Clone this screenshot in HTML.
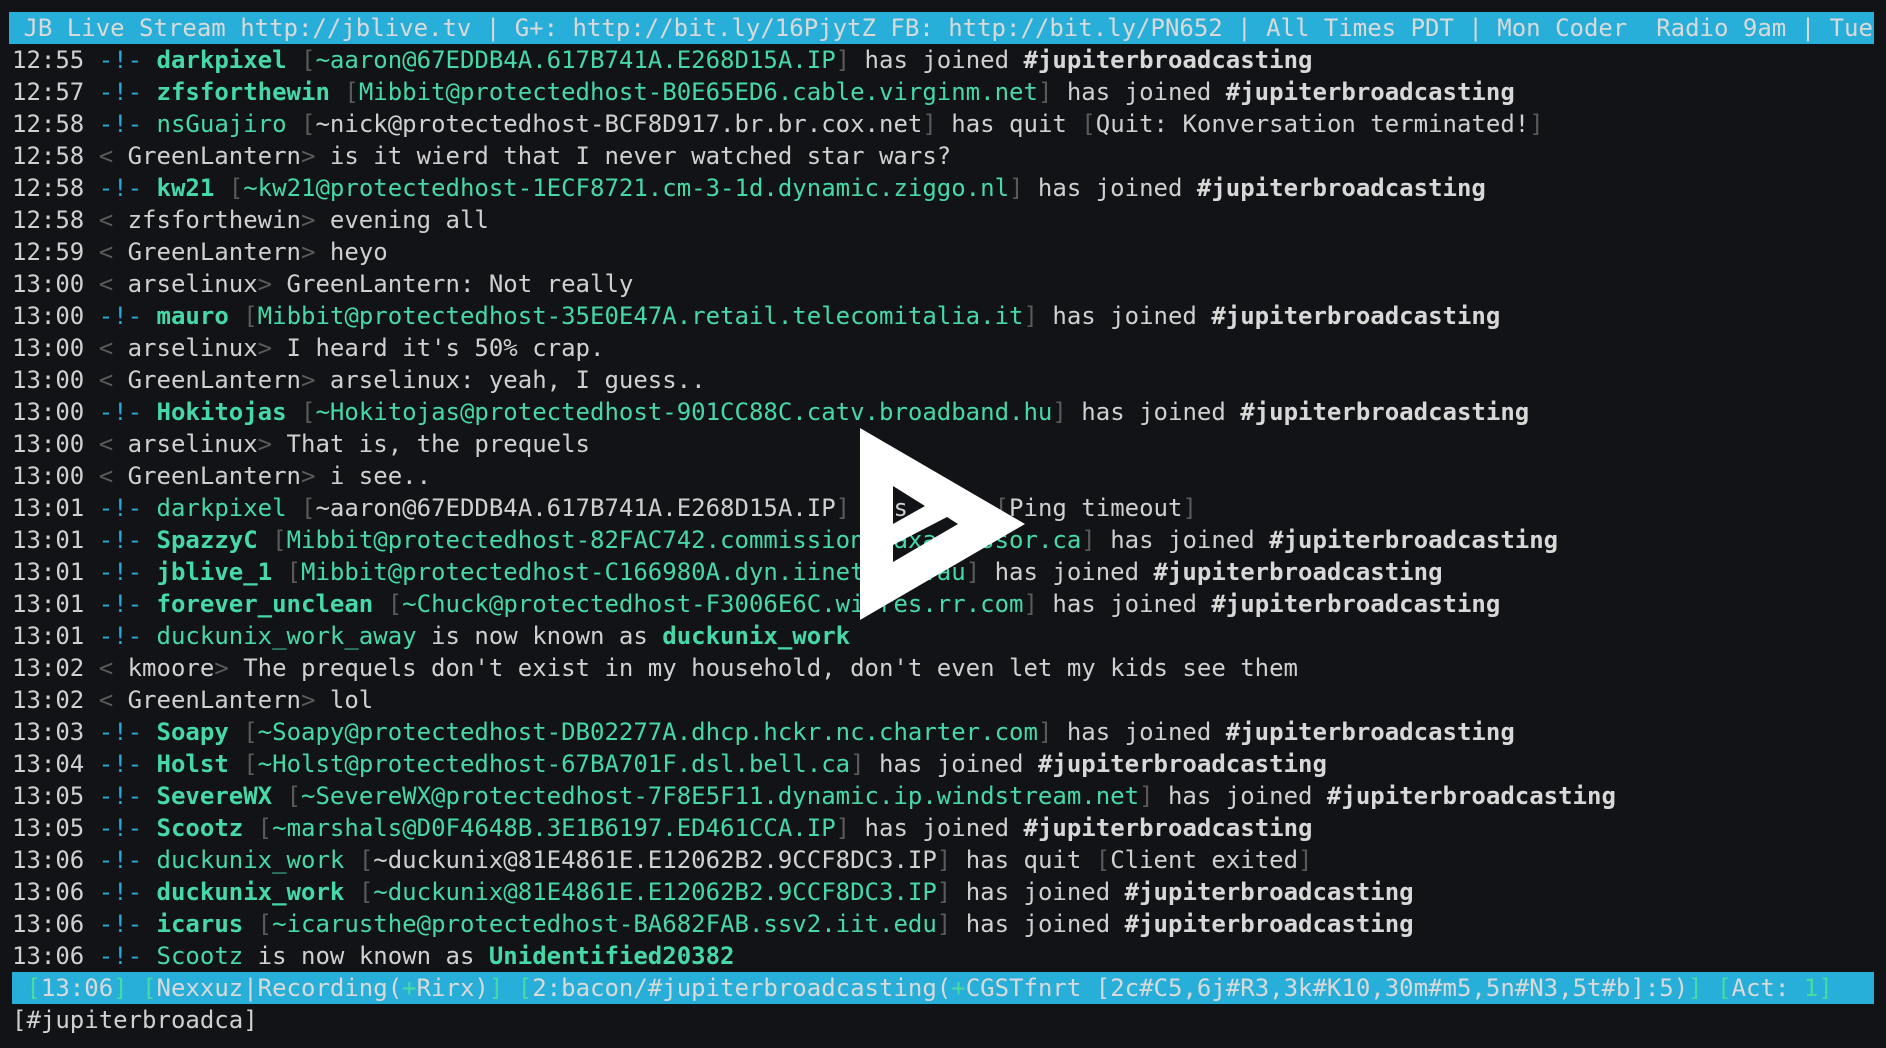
<!DOCTYPE html>
<html><head><meta charset="utf-8"><style>
html,body{margin:0;padding:0;background:#121316;width:1886px;height:1048px;overflow:hidden}
#t{position:absolute;left:12px;top:12px;font-family:"DejaVu Sans Mono","Liberation Mono",monospace;font-size:24px;line-height:32px;color:#d0d0d0}
.l{height:32px;white-space:pre;overflow:hidden}
.bar{background:#27afd9;color:#d9d9d9;width:1862px;margin-left:-3px}
.b{color:#27a9d9}.n{color:#46d9a8;font-weight:bold}.c{color:#46d9a8}.g{color:#5a5a5a}.w{color:#d8d8d8;font-weight:bold}.q{color:#4ad9a0}
</style></head><body>
<div id="t">
<div class="l bar" style="margin-left:-3px;width:1865px"> JB Live Stream http://jblive.tv | G+: http://bit.ly/16PjytZ FB: http://bit.ly/PN652 | All Times PDT | Mon Coder  Radio 9am | Tue</div>
<div class="l">12:55 <span class="b">-!-</span> <span class="n">darkpixel</span> <span class="g">[</span><span class="c">~aaron@67EDDB4A.617B741A.E268D15A.IP</span><span class="g">]</span> has joined <span class="w">#jupiterbroadcasting</span></div>
<div class="l">12:57 <span class="b">-!-</span> <span class="n">zfsforthewin</span> <span class="g">[</span><span class="c">Mibbit@protectedhost-B0E65ED6.cable.virginm.net</span><span class="g">]</span> has joined <span class="w">#jupiterbroadcasting</span></div>
<div class="l">12:58 <span class="b">-!-</span> <span class="c">nsGuajiro</span> <span class="g">[</span>~nick@protectedhost-BCF8D917.br.br.cox.net<span class="g">]</span> has quit <span class="g">[</span>Quit: Konversation terminated!<span class="g">]</span></div>
<div class="l">12:58 <span class="g">&lt;</span> GreenLantern<span class="g">&gt;</span> is it wierd that I never watched star wars?</div>
<div class="l">12:58 <span class="b">-!-</span> <span class="n">kw21</span> <span class="g">[</span><span class="c">~kw21@protectedhost-1ECF8721.cm-3-1d.dynamic.ziggo.nl</span><span class="g">]</span> has joined <span class="w">#jupiterbroadcasting</span></div>
<div class="l">12:58 <span class="g">&lt;</span> zfsforthewin<span class="g">&gt;</span> evening all</div>
<div class="l">12:59 <span class="g">&lt;</span> GreenLantern<span class="g">&gt;</span> heyo</div>
<div class="l">13:00 <span class="g">&lt;</span> arselinux<span class="g">&gt;</span> GreenLantern: Not really</div>
<div class="l">13:00 <span class="b">-!-</span> <span class="n">mauro</span> <span class="g">[</span><span class="c">Mibbit@protectedhost-35E0E47A.retail.telecomitalia.it</span><span class="g">]</span> has joined <span class="w">#jupiterbroadcasting</span></div>
<div class="l">13:00 <span class="g">&lt;</span> arselinux<span class="g">&gt;</span> I heard it's 50% crap.</div>
<div class="l">13:00 <span class="g">&lt;</span> GreenLantern<span class="g">&gt;</span> arselinux: yeah, I guess..</div>
<div class="l">13:00 <span class="b">-!-</span> <span class="n">Hokitojas</span> <span class="g">[</span><span class="c">~Hokitojas@protectedhost-901CC88C.catv.broadband.hu</span><span class="g">]</span> has joined <span class="w">#jupiterbroadcasting</span></div>
<div class="l">13:00 <span class="g">&lt;</span> arselinux<span class="g">&gt;</span> That is, the prequels</div>
<div class="l">13:00 <span class="g">&lt;</span> GreenLantern<span class="g">&gt;</span> i see..</div>
<div class="l">13:01 <span class="b">-!-</span> <span class="c">darkpixel</span> <span class="g">[</span>~aaron@67EDDB4A.617B741A.E268D15A.IP<span class="g">]</span> has quit <span class="g">[</span>Ping timeout<span class="g">]</span></div>
<div class="l">13:01 <span class="b">-!-</span> <span class="n">SpazzyC</span> <span class="g">[</span><span class="c">Mibbit@protectedhost-82FAC742.commission.taxassessor.ca</span><span class="g">]</span> has joined <span class="w">#jupiterbroadcasting</span></div>
<div class="l">13:01 <span class="b">-!-</span> <span class="n">jblive_1</span> <span class="g">[</span><span class="c">Mibbit@protectedhost-C166980A.dyn.iinet.net.au</span><span class="g">]</span> has joined <span class="w">#jupiterbroadcasting</span></div>
<div class="l">13:01 <span class="b">-!-</span> <span class="n">forever_unclean</span> <span class="g">[</span><span class="c">~Chuck@protectedhost-F3006E6C.wi.res.rr.com</span><span class="g">]</span> has joined <span class="w">#jupiterbroadcasting</span></div>
<div class="l">13:01 <span class="b">-!-</span> <span class="c">duckunix_work_away</span> is now known as <span class="n">duckunix_work</span></div>
<div class="l">13:02 <span class="g">&lt;</span> kmoore<span class="g">&gt;</span> The prequels don't exist in my household, don't even let my kids see them</div>
<div class="l">13:02 <span class="g">&lt;</span> GreenLantern<span class="g">&gt;</span> lol</div>
<div class="l">13:03 <span class="b">-!-</span> <span class="n">Soapy</span> <span class="g">[</span><span class="c">~Soapy@protectedhost-DB02277A.dhcp.hckr.nc.charter.com</span><span class="g">]</span> has joined <span class="w">#jupiterbroadcasting</span></div>
<div class="l">13:04 <span class="b">-!-</span> <span class="n">Holst</span> <span class="g">[</span><span class="c">~Holst@protectedhost-67BA701F.dsl.bell.ca</span><span class="g">]</span> has joined <span class="w">#jupiterbroadcasting</span></div>
<div class="l">13:05 <span class="b">-!-</span> <span class="n">SevereWX</span> <span class="g">[</span><span class="c">~SevereWX@protectedhost-7F8E5F11.dynamic.ip.windstream.net</span><span class="g">]</span> has joined <span class="w">#jupiterbroadcasting</span></div>
<div class="l">13:05 <span class="b">-!-</span> <span class="n">Scootz</span> <span class="g">[</span><span class="c">~marshals@D0F4648B.3E1B6197.ED461CCA.IP</span><span class="g">]</span> has joined <span class="w">#jupiterbroadcasting</span></div>
<div class="l">13:06 <span class="b">-!-</span> <span class="c">duckunix_work</span> <span class="g">[</span>~duckunix@81E4861E.E12062B2.9CCF8DC3.IP<span class="g">]</span> has quit <span class="g">[</span>Client exited<span class="g">]</span></div>
<div class="l">13:06 <span class="b">-!-</span> <span class="n">duckunix_work</span> <span class="g">[</span><span class="c">~duckunix@81E4861E.E12062B2.9CCF8DC3.IP</span><span class="g">]</span> has joined <span class="w">#jupiterbroadcasting</span></div>
<div class="l">13:06 <span class="b">-!-</span> <span class="n">icarus</span> <span class="g">[</span><span class="c">~icarusthe@protectedhost-BA682FAB.ssv2.iit.edu</span><span class="g">]</span> has joined <span class="w">#jupiterbroadcasting</span></div>
<div class="l">13:06 <span class="b">-!-</span> <span class="c">Scootz</span> is now known as <span class="n">Unidentified20382</span></div>
<div class="l bar" style="margin-left:0;width:1862px"> <span class="q">[</span>13:06<span class="q">]</span> <span class="q">[</span>Nexxuz|Recording(<span class="q">+</span>Rirx)<span class="q">]</span> <span class="q">[</span>2:bacon/#jupiterbroadcasting(<span class="q">+</span>CGSTfnrt [2c#C5,6j#R3,3k#K10,30m#m5,5n#N3,5t#b]:5)<span class="q">]</span> <span class="q">[</span>Act: <span class="q">1]</span></div>
<div class="l">[#jupiterbroadca]</div>
</div>
<svg width="1886" height="1048" style="position:absolute;left:0;top:0">
<path fill="#fff" fill-rule="evenodd" d="M860 428 L1025 524 L860 620 Z M893 486 L925 506 L893 524 Z M893 545 L947 517 L958 524 L893 562 Z"/>
</svg>
</body></html>
